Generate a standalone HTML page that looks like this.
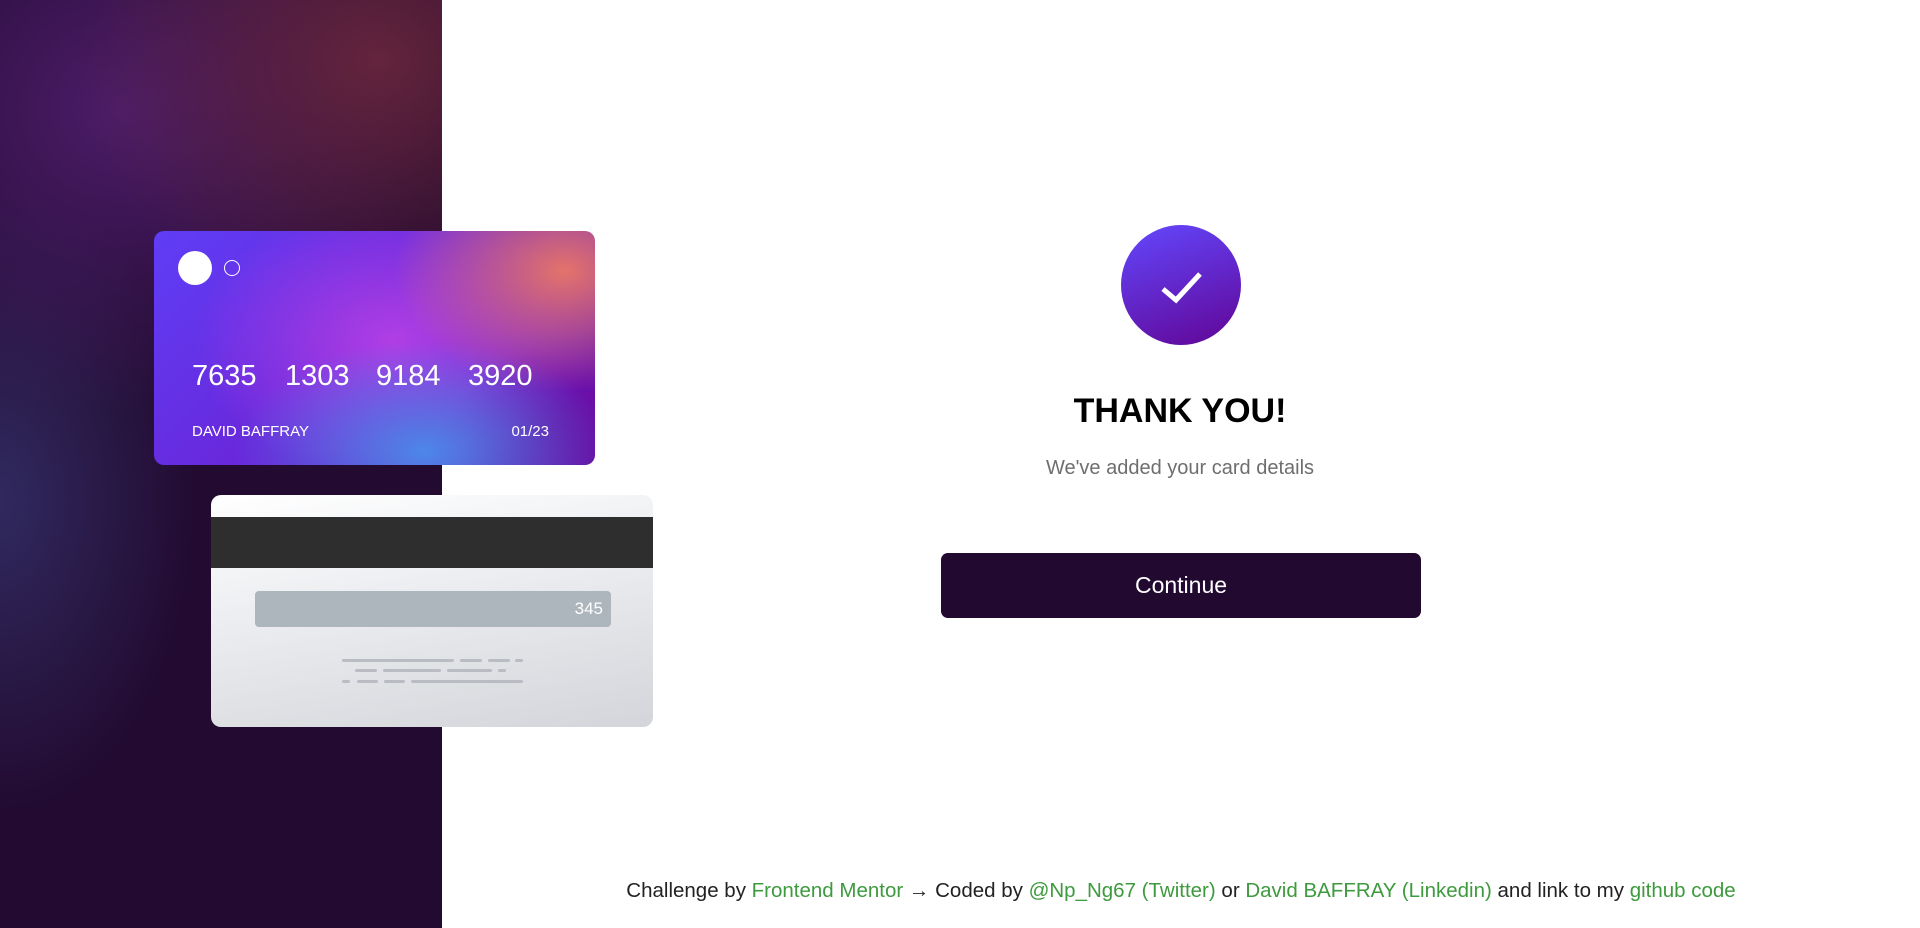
<!DOCTYPE html>
<html><head><meta charset="utf-8"><style>
*{margin:0;padding:0;box-sizing:border-box}
body{width:1920px;height:928px;position:relative;overflow:hidden;background:#fff;font-family:"Liberation Sans",sans-serif}
.left{position:absolute;left:0;top:0;width:442px;height:928px;background:
radial-gradient(ellipse 300px 260px at 380px 60px,rgba(110,40,60,.85),transparent),
radial-gradient(ellipse 320px 300px at 120px 110px,rgba(80,30,110,.9),transparent),
radial-gradient(ellipse 200px 320px at 0px 500px,rgba(50,45,100,.9),transparent),
#220a30}
.front{position:absolute;left:154px;top:231px;width:441px;height:234px;border-radius:10px;overflow:hidden;background:
radial-gradient(ellipse 170px 120px at 410px 40px,#e4736a,transparent),
radial-gradient(ellipse 190px 110px at 270px 220px,#4d87e8,transparent),
radial-gradient(ellipse 140px 120px at 430px 220px,#6a0aa0,transparent),
radial-gradient(ellipse 200px 140px at 240px 110px,#b03fe5,transparent),
linear-gradient(135deg,#5e3ef6,#6a26d8 50%,#6a10a8);color:#fff}
.c1{position:absolute;left:178px;top:251px;width:34px;height:34px;border-radius:50%;background:#fff}
.c2{position:absolute;left:224px;top:260px;width:16px;height:16px;border-radius:50%;border:1px solid #fff}
.num{position:absolute;top:360px;font-size:29px;color:#fff}
.sm{position:absolute;top:423px;font-size:15px;color:#fff}
.back{position:absolute;left:211px;top:495px;width:442px;height:232px;border-radius:10px;overflow:hidden;background:linear-gradient(170deg,#fff,#eceef1 40%,#d3d5da)}
.stripe{position:absolute;left:0;top:22px;width:100%;height:51px;background:#2e2e2e}
.cvv{position:absolute;left:44px;top:96px;width:356px;height:36px;border-radius:4px;background:#adb5bd;color:#fff;font-size:17px;text-align:right;padding:8px 8px 0 0}
.ln{position:absolute;height:3px;border-radius:2px;background:#b9bcc2}
.check{position:absolute;left:1121px;top:225px;width:120px;height:120px;border-radius:50%;background:linear-gradient(160deg,#6348fe,#610595)}
h1{position:absolute;left:940px;width:480px;top:392px;text-align:center;font-size:34px;font-weight:bold;color:#000}
.sub{position:absolute;left:940px;width:480px;top:457px;text-align:center;font-size:20px;color:#6e6e6e}
.btn{position:absolute;left:941px;top:553px;width:480px;height:65px;border-radius:7px;background:#21092f;color:#fff;font-size:23px;text-align:center;line-height:65px}
.foot{position:absolute;left:442px;right:0;top:879px;text-align:center;font-size:20.5px;color:#222}
.foot a{color:#3e9a3e;text-decoration:none}
</style></head><body>
<div class="left"></div>
<div class="front"></div>
<div class="c1"></div><div class="c2"></div>
<div class="num" style="left:192px">7635</div>
<div class="num" style="left:285px">1303</div>
<div class="num" style="left:376px">9184</div>
<div class="num" style="left:468px">3920</div>
<div class="sm" style="left:192px">DAVID BAFFRAY</div>
<div class="sm" style="left:500px;width:49px;text-align:right">01/23</div>
<div class="back"><div class="stripe"></div><div class="cvv">345</div>
<div class="ln" style="left:131px;top:164px;width:112px"></div><div class="ln" style="left:249px;top:164px;width:22px"></div><div class="ln" style="left:277px;top:164px;width:22px"></div><div class="ln" style="left:304px;top:164px;width:8px"></div>
<div class="ln" style="left:144px;top:174px;width:22px"></div><div class="ln" style="left:172px;top:174px;width:58px"></div><div class="ln" style="left:236px;top:174px;width:45px"></div><div class="ln" style="left:287px;top:174px;width:8px"></div>
<div class="ln" style="left:131px;top:185px;width:8px"></div><div class="ln" style="left:146px;top:185px;width:21px"></div><div class="ln" style="left:173px;top:185px;width:21px"></div><div class="ln" style="left:200px;top:185px;width:112px"></div>
</div>
<div class="check"><svg width="120" height="120" viewBox="0 0 120 120"><path d="M42 64 L55 75 L79 49" fill="none" stroke="#fff" stroke-width="5"/></svg></div>
<h1>THANK YOU!</h1>
<div class="sub">We've added your card details</div>
<div class="btn">Continue</div>
<div class="foot">Challenge by <a>Frontend Mentor</a> → Coded by <a>@Np_Ng67 (Twitter)</a> or <a>David BAFFRAY (Linkedin)</a> and link to my <a>github code</a></div>
</body></html>
